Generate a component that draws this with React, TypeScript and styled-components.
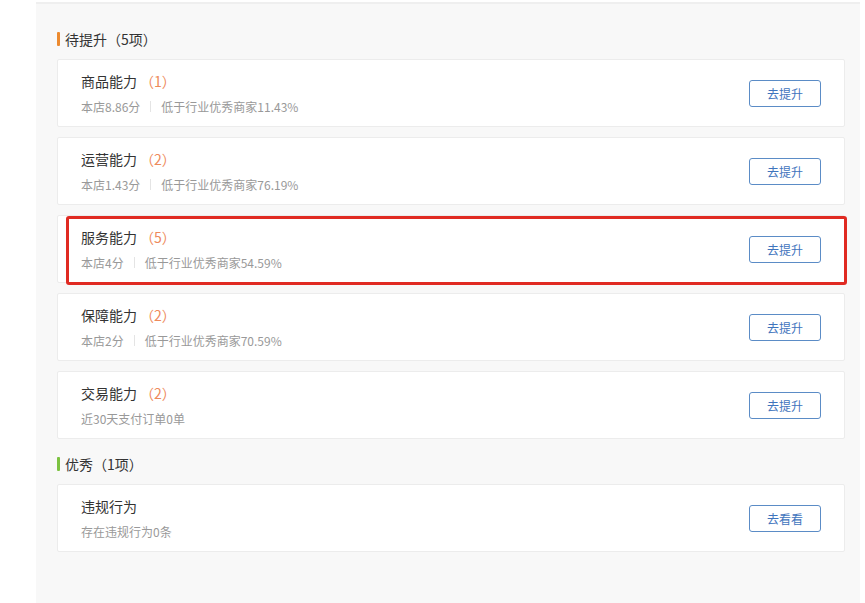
import React from "react";
import styled, { createGlobalStyle } from "styled-components";

const Global = createGlobalStyle`
  html, body { margin: 0; padding: 0; background: #ffffff; }
  body { font-family: "Noto Sans CJK SC", "Microsoft YaHei", "Liberation Sans", sans-serif; }
  #root { width: 865px; height: 603px; overflow: hidden; }
`;

const Page = styled.div`
  height: 603px;
  padding-top: 2px;
  box-sizing: border-box;
  padding-left: 36px;
`;

const Panel = styled.div`
  width: 824px;
  height: 601px;
  box-sizing: border-box;
  background: #f8f8f8;
  border-top: 2px solid #efefef;
  padding: 26px 15px 0 21px;
  display: flex;
  flex-direction: column;
`;

const Section = styled.section`
  display: flex;
  flex-direction: column;
  & + & { margin-top: 16px; }
`;

const SectionHeader = styled.div<{ $bar: string }>`
  display: flex;
  align-items: center;
  height: 18px;
  font-size: 14px;
  color: #333;
  margin-bottom: 11px;
  &::before {
    content: "";
    width: 3px;
    height: 14px;
    background: ${(p) => p.$bar};
    margin-right: 5px;
    border-radius: 1px;
  }
`;

const CardList = styled.div`
  display: flex;
  flex-direction: column;
  gap: 10px;
`;

const Card = styled.div`
  position: relative;
  height: 68px;
  box-sizing: border-box;
  background: #fff;
  border: 1px solid #ececec;
  border-radius: 2px;
  display: flex;
  align-items: center;
  justify-content: space-between;
  padding: 0 23px 0 23px;
`;

const Info = styled.div`
  display: flex;
  flex-direction: column;
  gap: 7px;
`;

const Title = styled.div`
  font-size: 14px;
  color: #333;
  line-height: 19px;
`;

const Count = styled.span`
  color: #ee8a5b;
  margin-left: 3px;
`;

const Sub = styled.div`
  display: flex;
  align-items: center;
  font-size: 12px;
  color: #999;
  line-height: 17px;
`;

const Divider = styled.span`
  width: 1px;
  height: 11px;
  background: #e4e4e4;
  margin: 0 10px;
`;

const Button = styled.button`
  width: 72px;
  height: 27px;
  box-sizing: border-box;
  border: 1px solid #5b8cc6;
  border-radius: 3px;
  background: #fff;
  color: #3f74bd;
  font-size: 12px;
  font-family: inherit;
  padding: 0;
  cursor: pointer;
`;

const Highlight = styled.div`
  position: absolute;
  left: 8px;
  top: 0px;
  right: -3px;
  bottom: -3px;
  border: 3px solid #e02a22;
  border-radius: 3px;
  pointer-events: none;
`;

type Item = {
  title: string;
  count?: number;
  parts: string[];
  action: string;
  highlight?: boolean;
};

const pending: Item[] = [
  { title: "商品能力", count: 1, parts: ["本店8.86分", "低于行业优秀商家11.43%"], action: "去提升" },
  { title: "运营能力", count: 2, parts: ["本店1.43分", "低于行业优秀商家76.19%"], action: "去提升" },
  { title: "服务能力", count: 5, parts: ["本店4分", "低于行业优秀商家54.59%"], action: "去提升", highlight: true },
  { title: "保障能力", count: 2, parts: ["本店2分", "低于行业优秀商家70.59%"], action: "去提升" },
  { title: "交易能力", count: 2, parts: ["近30天支付订单0单"], action: "去提升" },
];

const good: Item[] = [
  { title: "违规行为", parts: ["存在违规行为0条"], action: "去看看" },
];

function Row({ item }: { item: Item }) {
  return (
    <Card>
      <Info>
        <Title>
          {item.title}
          {item.count !== undefined && <Count>（{item.count}）</Count>}
        </Title>
        <Sub>
          {item.parts.map((p, i) => (
            <React.Fragment key={i}>
              {i > 0 && <Divider />}
              <span>{p}</span>
            </React.Fragment>
          ))}
        </Sub>
      </Info>
      <Button>{item.action}</Button>
      {item.highlight && <Highlight />}
    </Card>
  );
}

export default function App() {
  return (
    <>
      <Global />
      <Page>
        <Panel>
          <Section>
            <SectionHeader $bar="#ec8a2f">待提升（5项）</SectionHeader>
            <CardList>
              {pending.map((it) => (
                <Row key={it.title} item={it} />
              ))}
            </CardList>
          </Section>
          <Section>
            <SectionHeader $bar="#7cc241">优秀（1项）</SectionHeader>
            <CardList>
              {good.map((it) => (
                <Row key={it.title} item={it} />
              ))}
            </CardList>
          </Section>
        </Panel>
      </Page>
    </>
  );
}
